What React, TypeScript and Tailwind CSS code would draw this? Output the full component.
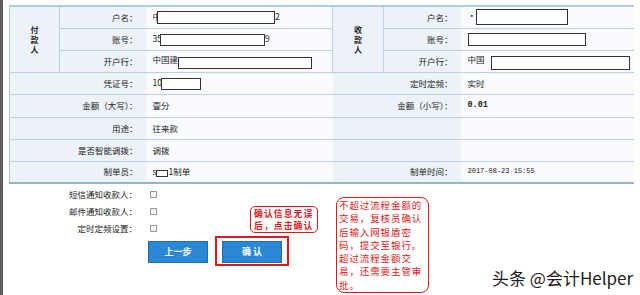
const cjk = '"Noto Sans CJK SC", "Noto Sans", sans-serif';

const line = "border-b border-[#bccfe2]";
const labelCell = `bg-[#ecf2f8] text-right pr-[8px] whitespace-nowrap ${line}`;
const valueCell = `bg-[#f8fafd] pl-[7px] whitespace-nowrap ${line}`;

function Redact({ w, h, className = "" }: { w: number; h: number; className?: string }) {
  return (
    <span
      className={`inline-block align-middle bg-white border border-[#333] ${className}`}
      style={{ width: w, height: h }}
    />
  );
}

function Group({ text, side }: { text: string; side: "l" | "r" }) {
  return (
    <td
      rowSpan={3}
      className={`bg-[#ecf2f8] align-middle ${line} ${side === "l" ? "border-r" : "border-x"} border-[#bccfe2]`}
    >
      <div className="flex flex-col items-center text-[8px] font-bold text-[#222] pt-[1px]">
        {text.split("").map((c, i) => (
          <span key={i} className="block h-[10px] leading-[10px]">
            {c}
          </span>
        ))}
      </div>
    </td>
  );
}

function CheckRow({ label }: { label: string }) {
  return (
    <div className="flex items-center h-[17px]">
      <div className="w-[136px] text-right pr-[8px]">{label}</div>
      <span className="ml-[5px] w-[7px] h-[7px] border border-[#9a9a9a] bg-[#f4f4f4]" />
    </div>
  );
}

function BlueButton({ children }: { children: React.ReactNode }) {
  return (
    <button className="w-[60px] h-[22px] bg-[#2b88d4] border border-[#1d6db0] text-white text-[9px] font-bold">
      {children}
    </button>
  );
}

const noteLines = [
  "不超过流程金额的",
  "交易，复核员确认",
  "后输入网银盾密",
  "码，提交至银行。",
  "超过流程金额交",
  "易，还需要主管审",
  "批。",
];

export default function App() {
  return (
    <div
      className="relative flex w-[640px] h-[295px] bg-white overflow-hidden text-[8.5px] text-[#222]"
      style={{ fontFamily: cjk }}
    >
      <div className="w-[3px] bg-[#5e5e5e]" />

      <div className="pl-[6px] pt-[5px]">
        <table className="w-[624px] table-fixed border-collapse border-t-2 border-t-[#b3cbe2] border-l border-l-[#b3cbe2] border-b-2 border-b-[#95b3cf]">
          <colgroup>
            <col className="w-[50px]" />
            <col className="w-[86px]" />
            <col className="w-[187px]" />
            <col className="w-[51px]" />
            <col className="w-[77px]" />
            <col className="w-[173px]" />
          </colgroup>
          <tbody>
            <tr className="h-[22px]">
              <Group text="付款人" side="l" />
              <td className={labelCell}>户名：</td>
              <td className={valueCell}>
                中<Redact w={118} h={13} className="-ml-[4px]" />2
              </td>
              <Group text="收款人" side="r" />
              <td className={labelCell}>户名：</td>
              <td className={valueCell}>
                ·<Redact w={92} h={16} />
              </td>
            </tr>
            <tr className="h-[22px]">
              <td className={labelCell}>账号：</td>
              <td className={valueCell}>
                35<Redact w={105} h={12} className="-ml-[2px]" />9
              </td>
              <td className={labelCell}>账号：</td>
              <td className={valueCell}>
                <Redact w={118} h={13} />
              </td>
            </tr>
            <tr className="h-[22px]">
              <td className={labelCell}>开户行：</td>
              <td className={valueCell}>
                中国建<Redact w={134} h={12} className="mt-[3px]" />
              </td>
              <td className={labelCell}>开户行：</td>
              <td className={valueCell}>
                中国<Redact w={139} h={14} className="ml-[6px] mt-[4px]" />
              </td>
            </tr>
            <tr className="h-[22px]">
              <td colSpan={2} className={labelCell}>凭证号：</td>
              <td className={valueCell}>
                10<Redact w={40} h={12} className="-ml-[1px]" />
              </td>
              <td colSpan={2} className={labelCell}>定时定频：</td>
              <td className={valueCell}>实时</td>
            </tr>
            <tr className="h-[23px]">
              <td colSpan={2} className={labelCell}>金额（大写）：</td>
              <td className={valueCell}>壹分</td>
              <td colSpan={2} className={labelCell}>金额（小写）：</td>
              <td className={`${valueCell} font-bold`} style={{ fontFamily: '"Liberation Mono", monospace' }}>
                0.01
              </td>
            </tr>
            <tr className="h-[22px]">
              <td colSpan={2} className={labelCell}>用途：</td>
              <td className={valueCell}>往来款</td>
              <td colSpan={2} className={labelCell}></td>
              <td className={valueCell}></td>
            </tr>
            <tr className="h-[22px]">
              <td colSpan={2} className={labelCell}>是否智能调拨：</td>
              <td className={valueCell}>调拨</td>
              <td colSpan={2} className={labelCell}></td>
              <td className={valueCell}></td>
            </tr>
            <tr className="h-[22px]">
              <td colSpan={2} className={labelCell}>制单员：</td>
              <td className={valueCell}>
                s<Redact w={12} h={7} />1制单
              </td>
              <td colSpan={2} className={labelCell}>制单时间：</td>
              <td className={valueCell} style={{ fontFamily: '"Liberation Mono", monospace' }}>
                <span className="text-[7px]">2017-08-23 15:55</span>
              </td>
            </tr>
          </tbody>
        </table>

        <div className="mt-[2px]">
          <CheckRow label="短信通知收款人：" />
          <CheckRow label="邮件通知收款人：" />
          <CheckRow label="定时定频设置：" />
        </div>

        <div className="flex items-start -mt-[1px] pl-[139px]">
          <div className="mt-[5px]">
            <BlueButton>上一步</BlueButton>
          </div>
          <div className="ml-[7px] border-2 border-[#e0191b] px-[5px] pt-[3px] pb-[1px]">
            <BlueButton>确 认</BlueButton>
          </div>
        </div>
      </div>

      {/* annotations */}
      <div className="absolute left-[250px] top-[206px] w-[68px] h-[27px] border-[1.5px] border-[#e0191b] rounded-[5px] bg-white pl-[3px] pt-[0.5px] text-[#e0191b] text-[8.8px] leading-[12.5px] tracking-[1.1px] font-bold whitespace-nowrap">
        <div>确认信息无误</div>
        <div>后，点击确认</div>
      </div>

      <div className="absolute left-[336px] top-[197px] w-[93px] h-[96px] border-[1.5px] border-[#e0191b] rounded-[8px] bg-white pl-[2px] pt-[1px] text-[#e0191b] text-[9.5px] leading-[13.3px] tracking-[0.9px] whitespace-nowrap">
        {noteLines.map((t) => (
          <div key={t}>{t}</div>
        ))}
      </div>

      <div
        className="absolute left-[492px] top-[267px] text-[17px] leading-[22px] text-[#1c1c1c] whitespace-nowrap"
        style={{ textShadow: "0 0 2px #fff" }}
      >
        头条 @会计Helper
      </div>
    </div>
  );
}
